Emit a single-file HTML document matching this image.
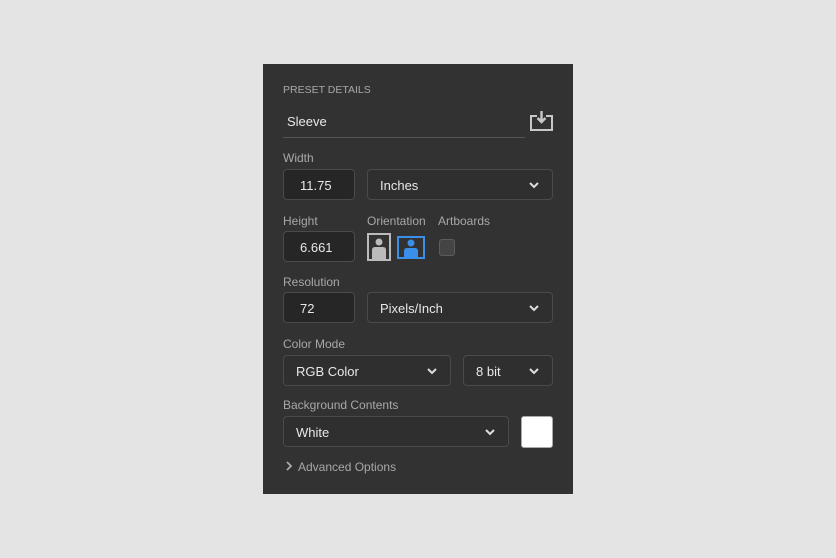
<!DOCTYPE html>
<html><head><style>
*{box-sizing:border-box;margin:0;padding:0}
body{width:836px;height:558px;background:#e4e4e4;font-family:"Liberation Sans",sans-serif;position:relative;overflow:hidden}
.p{position:absolute;left:263px;top:64px;width:310px;height:430px;background:#323232}
.a{position:absolute}
.lbl{font-size:12px;color:#a8a8a8;line-height:14px}
.box{position:absolute;border:1px solid #4a4a4a;border-radius:4px;height:31px;font-size:13px;color:#e8e8e8;line-height:31px}
.in{background:#262626;padding-left:16px}
.sel{background:#2f2f2f;padding-left:12px}
.chev{position:absolute;right:12px;top:11px;width:12px;height:8px}
</style></head><body>
<div class="p"></div>
<div class="a" style="left:283px;top:84px;font-size:10.5px;color:#a8a8a8">PRESET DETAILS</div>
<div class="a" style="left:287px;top:114px;font-size:13px;color:#e8e8e8">Sleeve</div>
<div class="a" style="left:283px;top:137px;width:242px;height:1px;background:#555"></div>
<svg class="a" style="left:530px;top:109px" width="24" height="24" viewBox="0 0 24 24"><path d="M7 7H1v14h21V7h-6" fill="none" stroke="#c8c8c8" stroke-width="2"/><path d="M11.5 2v11M7.5 9l4 4 4-4" fill="none" stroke="#c8c8c8" stroke-width="2.4"/></svg>
<div class="a lbl" style="left:283px;top:151px">Width</div>
<div class="box in" style="left:283px;top:169px;width:72px">11.75</div>
<div class="box sel" style="left:367px;top:169px;width:186px">Inches<svg class="chev" viewBox="0 0 12 8"><path d="M2 2l4 4 4-4" fill="none" stroke="#ddd" stroke-width="2"/></svg></div>
<div class="a lbl" style="left:283px;top:214px">Height</div>
<div class="a lbl" style="left:367px;top:214px">Orientation</div>
<div class="a lbl" style="left:438px;top:214px">Artboards</div>
<div class="box in" style="left:283px;top:231px;width:72px">6.661</div>
<svg class="a" style="left:367px;top:233px" width="24" height="28" viewBox="0 0 24 28"><rect x="1" y="1" width="22" height="26" fill="none" stroke="#bbb" stroke-width="2"/><circle cx="12" cy="9" r="3.5" fill="#bbb"/><path d="M5 26v-9q0-3 3-3h8q3 0 3 3v9z" fill="#bbb"/></svg>
<svg class="a" style="left:397px;top:236px" width="28" height="23" viewBox="0 0 28 23"><rect x="1" y="1" width="26" height="21" fill="none" stroke="#3a8fe8" stroke-width="2"/><circle cx="14" cy="7" r="3.5" fill="#3a8fe8"/><path d="M7 22v-7q0-3 3-3h8q3 0 3 3v7z" fill="#3a8fe8"/></svg>
<div class="a" style="left:439px;top:239px;width:16px;height:17px;background:#444;border:1px solid #5c5c5c;border-radius:3px"></div>
<div class="a lbl" style="left:283px;top:275px">Resolution</div>
<div class="box in" style="left:283px;top:292px;width:72px">72</div>
<div class="box sel" style="left:367px;top:292px;width:186px">Pixels/Inch<svg class="chev" viewBox="0 0 12 8"><path d="M2 2l4 4 4-4" fill="none" stroke="#ddd" stroke-width="2"/></svg></div>
<div class="a lbl" style="left:283px;top:337px">Color Mode</div>
<div class="box sel" style="left:283px;top:355px;width:168px">RGB Color<svg class="chev" viewBox="0 0 12 8"><path d="M2 2l4 4 4-4" fill="none" stroke="#ddd" stroke-width="2"/></svg></div>
<div class="box sel" style="left:463px;top:355px;width:90px">8 bit<svg class="chev" viewBox="0 0 12 8"><path d="M2 2l4 4 4-4" fill="none" stroke="#ddd" stroke-width="2"/></svg></div>
<div class="a lbl" style="left:283px;top:398px">Background Contents</div>
<div class="box sel" style="left:283px;top:416px;width:226px">White<svg class="chev" viewBox="0 0 12 8"><path d="M2 2l4 4 4-4" fill="none" stroke="#ddd" stroke-width="2"/></svg></div>
<div class="a" style="left:521px;top:416px;width:32px;height:32px;background:#fff;border:1px solid #aaa;border-radius:3px"></div>
<svg class="a" style="left:285px;top:461px" width="8" height="10" viewBox="0 0 8 10"><path d="M2 1l4 4-4 4" fill="none" stroke="#aaa" stroke-width="1.8"/></svg>
<div class="a lbl" style="left:298px;top:460px">Advanced Options</div>
</body></html>
